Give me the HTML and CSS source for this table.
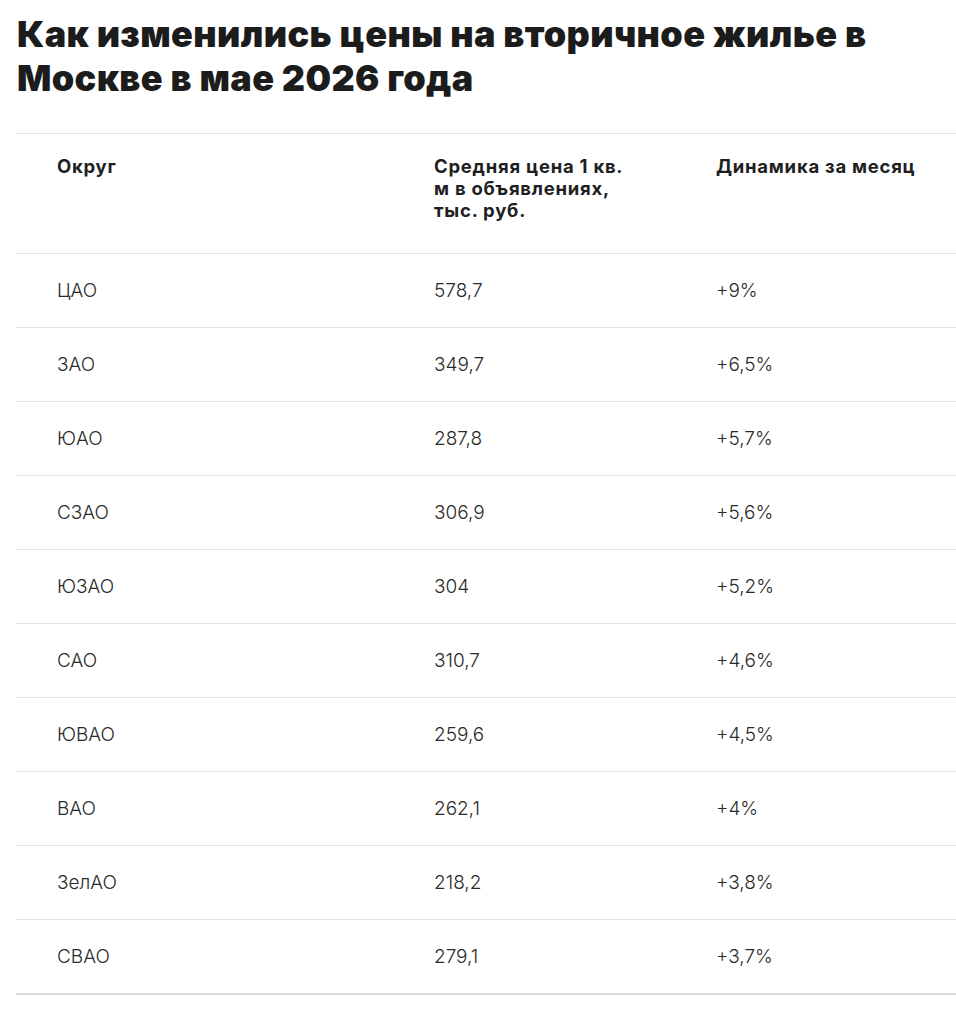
FILE: index.html
```html
<!DOCTYPE html>
<html lang="ru">
<head>
<meta charset="utf-8">
<title>Цены на вторичное жилье</title>
<link rel="stylesheet" href="styles.css">
</head>
<body>
<div class="page">
  <h1 class="title">Как изменились цены на вторичное жилье в Москве в мае 2026 года</h1>
  <div class="table">
    <div class="row head">
      <div class="cell">Округ</div>
      <div class="cell"><span class="wrap">Средняя цена 1 кв. м в объявлениях, тыс. руб.</span></div>
      <div class="cell">Динамика за месяц</div>
    </div>
    <div class="row"><div class="cell">ЦАО</div><div class="cell">578,7</div><div class="cell">+9%</div></div>
    <div class="row"><div class="cell">ЗАО</div><div class="cell">349,7</div><div class="cell">+6,5%</div></div>
    <div class="row"><div class="cell">ЮАО</div><div class="cell">287,8</div><div class="cell">+5,7%</div></div>
    <div class="row"><div class="cell">СЗАО</div><div class="cell">306,9</div><div class="cell">+5,6%</div></div>
    <div class="row"><div class="cell">ЮЗАО</div><div class="cell">304</div><div class="cell">+5,2%</div></div>
    <div class="row"><div class="cell">САО</div><div class="cell">310,7</div><div class="cell">+4,6%</div></div>
    <div class="row"><div class="cell">ЮВАО</div><div class="cell">259,6</div><div class="cell">+4,5%</div></div>
    <div class="row"><div class="cell">ВАО</div><div class="cell">262,1</div><div class="cell">+4%</div></div>
    <div class="row"><div class="cell">ЗелАО</div><div class="cell">218,2</div><div class="cell">+3,8%</div></div>
    <div class="row last"><div class="cell">СВАО</div><div class="cell">279,1</div><div class="cell">+3,7%</div></div>
  </div>
</div>
</body>
</html>
```

FILE: styles.css
```css
html, body {
  margin: 0;
  padding: 0;
  background: #ffffff;
}

.page {
  padding: 12px 0 0 16px;
  font-family: Inter, "Liberation Sans", sans-serif;
  color: #1f1f1f;
}

.title {
  margin: 0 20px 0 1px;
  font-size: 36px;
  line-height: 44px;
  font-weight: 900;
  letter-spacing: 0.35px;
  color: #1c1c1c;
}

.table {
  margin-top: 33px;
  border-top: 1px solid #e3e3e3;
}

.row {
  display: grid;
  grid-template-columns: 377px 282px 1fr;
  padding-left: 41px;
  height: 73px;
  align-items: center;
  border-bottom: 1px solid #e3e3e3;
  font-size: 19px;
  font-weight: 300;
  color: #2a2a2a;
}

.row.head {
  height: 119px;
  align-items: start;
  font-size: 18.5px;
  line-height: 22px;
  font-weight: 700;
  letter-spacing: 0.75px;
  color: #1f1f1f;
}

.row.head .cell {
  padding-top: 21px;
}

.wrap {
  display: block;
  max-width: 194px;
}

.row.last {
  border-bottom: 2px solid #d9d9d9;
}
```
